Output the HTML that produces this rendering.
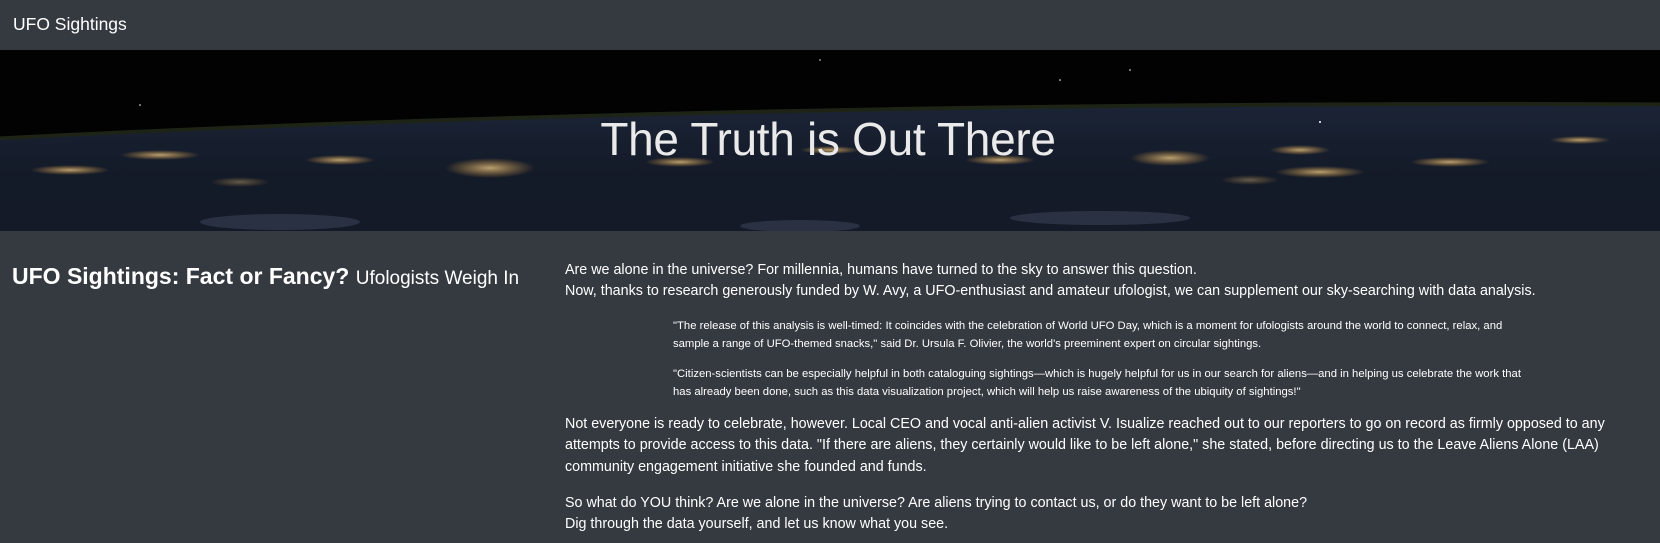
<!DOCTYPE html>
<html><head><meta charset="utf-8"><style>
*{margin:0;padding:0;box-sizing:border-box}
html,body{width:1660px;height:543px;overflow:hidden}
body{background:#343a40;color:#fff;font-family:"Liberation Sans",sans-serif;position:relative}
.nav{position:absolute;left:0;top:0;width:1660px;height:50px;background:#343a40}
.brand{position:absolute;left:13px;top:14px;font-size:17.5px}
.hero{position:absolute;left:0;top:50px;width:1660px;height:181px;overflow:hidden;background:#000}
.hero svg{display:block;position:absolute;left:0;top:0}
.hero h1{position:absolute;left:0;width:1656px;text-align:center;top:66px;font-weight:300;font-size:46px;line-height:1;letter-spacing:-0.3px;color:#eaeaea}
.h2{position:absolute;left:12px;top:263px;font-size:23px;font-weight:bold;white-space:nowrap}
.h2 small{font-size:19px;font-weight:normal}
.p{position:absolute;left:565px;font-size:14.3px;line-height:21.3px;white-space:nowrap}
.q{position:absolute;left:673px;font-size:11.3px;line-height:18px;white-space:nowrap}
</style></head><body>
<div class="nav"><div class="brand">UFO Sightings</div></div>
<div class="hero">
<svg width="1660" height="181" viewBox="0 0 1660 181">
<defs>
<linearGradient id="e" x1="0" y1="0" x2="0" y2="1"><stop offset="0" stop-color="#1b2436"/><stop offset="0.2" stop-color="#131a28"/><stop offset="1" stop-color="#161c2a"/></linearGradient>
<radialGradient id="g"><stop offset="0" stop-color="#ffd890" stop-opacity="0.7"/><stop offset="1" stop-color="#ffb040" stop-opacity="0"/></radialGradient>
</defs>
<rect width="1660" height="181" fill="#020203"/>
<ellipse cx="1500" cy="224" rx="2500" ry="172" fill="#2a3320" opacity="0.7"/>
<ellipse cx="1500" cy="226" rx="2500" ry="170" fill="url(#e)"/>
<g fill="url(#g)">
<ellipse cx="160" cy="105" rx="40" ry="5"/><ellipse cx="490" cy="118" rx="45" ry="10"/><ellipse cx="340" cy="110" rx="35" ry="5"/>
<ellipse cx="680" cy="112" rx="35" ry="5"/><ellipse cx="1000" cy="110" rx="35" ry="5"/><ellipse cx="1170" cy="108" rx="40" ry="8"/>
<ellipse cx="1300" cy="100" rx="30" ry="5"/><ellipse cx="1320" cy="122" rx="45" ry="6"/><ellipse cx="1450" cy="112" rx="40" ry="5"/>
<ellipse cx="70" cy="120" rx="40" ry="5"/><ellipse cx="1580" cy="90" rx="30" ry="4"/><ellipse cx="830" cy="100" rx="30" ry="4"/>
<ellipse cx="240" cy="132" rx="30" ry="5" opacity="0.5"/><ellipse cx="1250" cy="130" rx="30" ry="5" opacity="0.5"/>
</g>
<g fill="#5d6882" opacity="0.3"><ellipse cx="280" cy="172" rx="80" ry="8"/><ellipse cx="800" cy="176" rx="60" ry="6"/><ellipse cx="1100" cy="168" rx="90" ry="7"/></g>
<g fill="#fff"><circle cx="1320" cy="72" r="1"/><circle cx="1060" cy="30" r="0.8"/><circle cx="140" cy="55" r="0.8"/><circle cx="1130" cy="20" r="0.8"/><circle cx="820" cy="10" r="0.7"/></g>
</svg>
<h1>The Truth is Out There</h1>
</div>
<div class="h2">UFO Sightings: Fact or Fancy? <small>Ufologists Weigh In</small></div>
<div class="p" style="top:260px">Are we alone in the universe? For millennia, humans have turned to the sky to answer this question.<br>Now, thanks to research generously funded by W. Avy, a UFO-enthusiast and amateur ufologist, we can supplement our sky-searching with data analysis.</div>
<div class="q" style="top:317px">"The release of this analysis is well-timed: It coincides with the celebration of World UFO Day, which is a moment for ufologists around the world to connect, relax, and<br>sample a range of UFO-themed snacks," said Dr. Ursula F. Olivier, the world's preeminent expert on circular sightings.</div>
<div class="q" style="top:365px">"Citizen-scientists can be especially helpful in both cataloguing sightings—which is hugely helpful for us in our search for aliens—and in helping us celebrate the work that<br>has already been done, such as this data visualization project, which will help us raise awareness of the ubiquity of sightings!"</div>
<div class="p" style="top:414px">Not everyone is ready to celebrate, however. Local CEO and vocal anti-alien activist V. Isualize reached out to our reporters to go on record as firmly opposed to any<br>attempts to provide access to this data. "If there are aliens, they certainly would like to be left alone," she stated, before directing us to the Leave Aliens Alone (LAA)<br>community engagement initiative she founded and funds.</div>
<div class="p" style="top:493px">So what do YOU think? Are we alone in the universe? Are aliens trying to contact us, or do they want to be left alone?<br>Dig through the data yourself, and let us know what you see.</div>
</body></html>
